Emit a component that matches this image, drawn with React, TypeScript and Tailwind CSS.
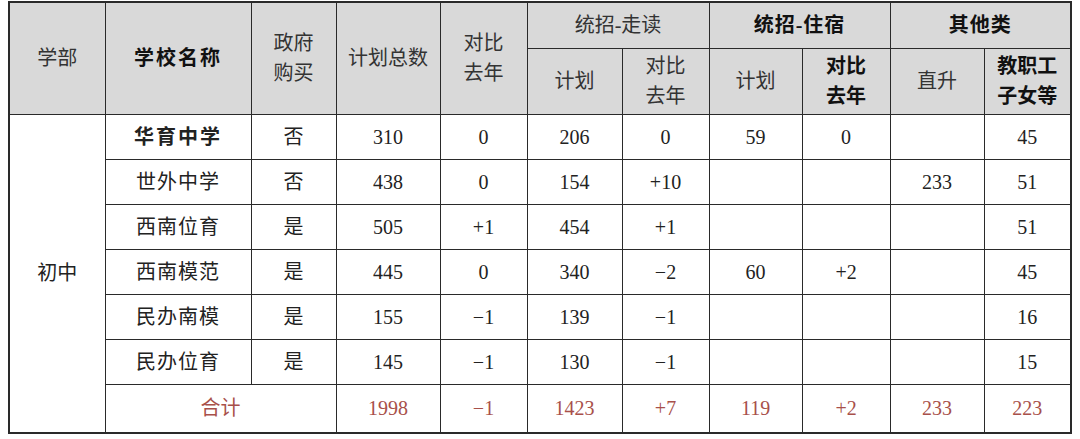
import React from 'react';

const rows = [
  { name: '华育中学', bold: true, gov: '否', total: '310', diff: '0', walkPlan: '206', walkDiff: '0', boardPlan: '59', boardDiff: '0', direct: '', staff: '45' },
  { name: '世外中学', gov: '否', total: '438', diff: '0', walkPlan: '154', walkDiff: '+10', boardPlan: '', boardDiff: '', direct: '233', staff: '51' },
  { name: '西南位育', gov: '是', total: '505', diff: '+1', walkPlan: '454', walkDiff: '+1', boardPlan: '', boardDiff: '', direct: '', staff: '51' },
  { name: '西南模范', gov: '是', total: '445', diff: '0', walkPlan: '340', walkDiff: '−2', boardPlan: '60', boardDiff: '+2', direct: '', staff: '45' },
  { name: '民办南模', gov: '是', total: '155', diff: '−1', walkPlan: '139', walkDiff: '−1', boardPlan: '', boardDiff: '', direct: '', staff: '16' },
  { name: '民办位育', gov: '是', total: '145', diff: '−1', walkPlan: '130', walkDiff: '−1', boardPlan: '', boardDiff: '', direct: '', staff: '15' },
];

const widths = [96, 146, 85, 104, 87, 95, 87, 93, 88, 94, 87];

const th = 'border border-[#2a2a2a] bg-[#d9d9d9] text-[20px] font-normal text-[#333] leading-[30px] text-center align-middle p-0';
const td = 'border border-[#2a2a2a] text-[20px] leading-[24px] text-[#222] text-center align-middle p-0';
const red = 'border border-[#2a2a2a] text-[20px] leading-[24px] text-[#a8504a] text-center align-middle p-0';

export default function App() {
  return (
    <div className="w-[1080px] h-[439px] bg-white pl-2 pt-px" style={{ fontFamily: '"Liberation Serif", "Noto Sans CJK SC", serif' }}>
      <table className="table-fixed border-collapse border-2 border-[#2a2a2a] w-[1062px]">
        <colgroup>
          {widths.map((w, i) => (
            <col key={i} style={{ width: w }} />
          ))}
        </colgroup>
        <thead>
          <tr className="h-[46px]">
            <th rowSpan={2} className={th}>学部</th>
            <th rowSpan={2} className={`${th} !font-bold !text-[#111] tracking-[2px]`}>学校名称</th>
            <th rowSpan={2} className={th}>政府<br />购买</th>
            <th rowSpan={2} className={th}>计划总数</th>
            <th rowSpan={2} className={th}>对比<br />去年</th>
            <th colSpan={2} className={th}>统招-走读</th>
            <th colSpan={2} className={`${th} !font-bold !text-[#111] tracking-[1px]`}>统招-住宿</th>
            <th colSpan={2} className={`${th} !font-bold !text-[#111] tracking-[1px]`}>其他类</th>
          </tr>
          <tr className="h-[66px]">
            <th className={th}>计划</th>
            <th className={th}>对比<br />去年</th>
            <th className={th}>计划</th>
            <th className={`${th} !font-bold !text-[#111]`}>对比<br />去年</th>
            <th className={th}>直升</th>
            <th className={`${th} !font-bold !text-[#111]`}>教职工<br />子女等</th>
          </tr>
        </thead>
        <tbody>
          {rows.map((r, i) => (
            <tr key={r.name} className="h-[45px]">
              {i === 0 && (
                <td rowSpan={7} className={td}>初中</td>
              )}
              <td className={`${td} ${r.bold ? 'font-bold tracking-[2px] text-[#111]' : 'tracking-[1px]'}`}>{r.name}</td>
              <td className={td}>{r.gov}</td>
              <td className={td}>{r.total}</td>
              <td className={td}>{r.diff}</td>
              <td className={td}>{r.walkPlan}</td>
              <td className={td}>{r.walkDiff}</td>
              <td className={td}>{r.boardPlan}</td>
              <td className={td}>{r.boardDiff}</td>
              <td className={td}>{r.direct}</td>
              <td className={td}>{r.staff}</td>
            </tr>
          ))}
          <tr className="h-[49px]">
            <td colSpan={2} className={red}>合计</td>
            <td className={red}>1998</td>
            <td className={red}>−1</td>
            <td className={red}>1423</td>
            <td className={red}>+7</td>
            <td className={red}>119</td>
            <td className={red}>+2</td>
            <td className={red}>233</td>
            <td className={red}>223</td>
          </tr>
        </tbody>
      </table>
    </div>
  );
}
